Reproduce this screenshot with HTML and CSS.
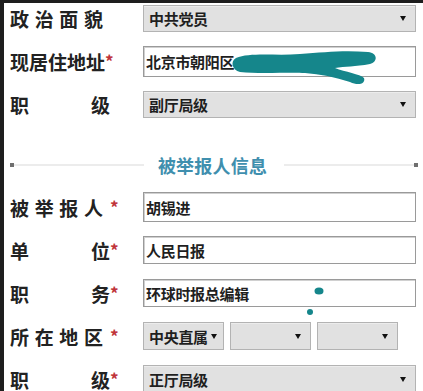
FILE: index.html
```html
<!DOCTYPE html>
<html lang="zh-CN">
<head>
<meta charset="utf-8">
<link rel="stylesheet" href="styles.css">
</head>
<body>
<div class="screen">
  <div class="form">
    <div class="row">
      <div class="label"><span class="t j4">政治面貌</span></div>
      <div class="sel h27"><span class="val">中共党员</span><i class="tri"></i></div>
    </div>
    <div class="row">
      <div class="label"><span class="t">现居住地址</span><span class="req">*</span></div>
      <div class="inp h31"><span class="val">北京市朝阳区</span></div>
    </div>
    <div class="row">
      <div class="label"><span class="t j2">职级</span></div>
      <div class="sel h27"><span class="val">副厅局级</span><i class="tri"></i></div>
    </div>

    <div class="section">
      <i class="sq"></i><span class="line"></span>
      <span class="title">被举报人信息</span>
      <span class="line"></span><i class="sq"></i>
    </div>

    <div class="row">
      <div class="label"><span class="t j4">被举报人</span><span class="req sp">*</span></div>
      <div class="inp"><span class="val">胡锡进</span></div>
    </div>
    <div class="row">
      <div class="label"><span class="t j2">单位</span><span class="req">*</span></div>
      <div class="inp h28"><span class="val">人民日报</span></div>
    </div>
    <div class="row">
      <div class="label"><span class="t j2">职务</span><span class="req">*</span></div>
      <div class="inp h28"><span class="val">环球时报总编辑</span></div>
    </div>
    <div class="row">
      <div class="label"><span class="t j4">所在地区</span><span class="req sp">*</span></div>
      <div class="region">
        <div class="sel small first"><span class="val clip">中央直属</span><i class="tri"></i></div>
        <div class="sel small"><span class="val"></span><i class="tri"></i></div>
        <div class="sel small"><span class="val"></span><i class="tri"></i></div>
      </div>
    </div>
    <div class="row">
      <div class="label"><span class="t j2">职级</span><span class="req">*</span></div>
      <div class="sel h28"><span class="val">正厅局级</span><i class="tri"></i></div>
    </div>
  </div>

  <svg class="scribble" width="423" height="391" viewBox="0 0 423 391">
    <path d="M236 58 C250 52 275 56 300 54 C325 52 345 50 368 52 C378 53 378 62 370 64 C355 67 345 66 335 68 C345 72 360 74 364 78 C366 84 358 86 350 82 C335 77 320 74 305 73 C290 72 260 74 240 72 C232 70 230 61 236 58 Z" fill="#15868b"/>
    <ellipse cx="319" cy="291" rx="4.5" ry="3.5" fill="#15868b"/>
    <circle cx="310" cy="312" r="3" fill="#15868b"/>
  </svg>
</div>
</body>
</html>
```

FILE: styles.css
```css
html, body {
  margin: 0;
  padding: 0;
  background: #ffffff;
}

.screen {
  position: relative;
  width: 423px;
  height: 391px;
  overflow: hidden;
  box-sizing: border-box;
  border-left: 4px solid #1e1e1e;
  border-top: 3px solid #1e1e1e;
  background: #fff;
  font-family: "Noto Sans CJK SC", "Noto Sans", sans-serif;
}

.form {
  display: flex;
  flex-direction: column;
  gap: 13px;
  padding: 0 0 0 6px;
}

.row {
  display: flex;
  align-items: center;
  height: 30px;
  flex: none;
}

.label {
  width: 133px;
  flex: none;
  display: flex;
  align-items: center;
  font-size: 19px;
  font-weight: 700;
  color: #222;
  line-height: 1;
}

.t {
  display: inline-block;
  white-space: nowrap;
}

.j4 {
  width: 93px;
  text-align: justify;
  text-align-last: justify;
}

.j2 {
  width: 100px;
  text-align: justify;
  text-align-last: justify;
}

.req {
  color: #c0343a;
  font-size: 17px;
  position: relative;
  top: -1px;
}

.req.sp {
  margin-left: 7px;
}

.sel, .inp {
  box-sizing: border-box;
  width: 273px;
  height: 30px;
  display: flex;
  align-items: center;
  font-size: 15px;
  font-weight: 700;
  color: #1f1f1f;
}

.sel {
  background: #e1e1e1;
  border: 1px solid #b3b3b3;
  padding: 0 9px 0 5px;
  justify-content: space-between;
  box-shadow: inset 0 1px 0 #ececec;
}

.inp {
  background: #fff;
  border: 1px solid #9a9a9a;
  padding: 0 6px 0 2px;
  box-shadow: inset 1px 1px 0 #d0d0d0;
}

.h27 { height: 27px; }
.h28 { height: 28px; }
.h31 { height: 31px; }

.val {
  white-space: nowrap;
  letter-spacing: -0.3px;
}

.tri {
  width: 0;
  height: 0;
  border-left: 3px solid transparent;
  border-right: 3px solid transparent;
  border-top: 5px solid #111;
  flex: none;
}

.region {
  display: flex;
  gap: 6px;
}

.sel.small {
  width: 81px;
  height: 28px;
  padding: 0 9px 0 5px;
}

.sel.small.first {
  padding-right: 6px;
}

.clip {
  width: 62px;
  overflow: hidden;
}

.section {
  display: flex;
  align-items: center;
  height: 24px;
  flex: none;
  margin: 21px 5px 2px 0;
}

.sq {
  width: 4px;
  height: 4px;
  background: #6f6f6f;
  flex: none;
}

.line {
  flex: 1;
  height: 2px;
  background: #ececec;
}

.title {
  padding: 0 17px 0 14px;
  font-size: 18px;
  font-weight: 700;
  color: #3f8fae;
  letter-spacing: 0.2px;
}

.scribble {
  position: absolute;
  left: -4px;
  top: -3px;
  pointer-events: none;
}
```
